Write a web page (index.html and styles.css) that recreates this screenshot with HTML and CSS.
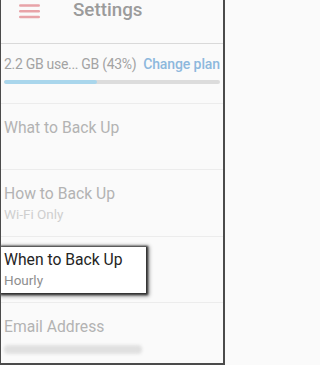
FILE: index.html
```html
<!DOCTYPE html>
<html>
<head>
<meta charset="utf-8">
<link rel="stylesheet" href="styles.css">
</head>
<body>
<div class="frame">
  <header class="topbar">
    <svg class="menu" width="21" height="20" viewBox="0 0 21 20">
      <g stroke="#e8a3a8" stroke-width="2.6" stroke-linecap="round">
        <line x1="1.3" y1="5.5" x2="19.7" y2="5.5"/>
        <line x1="1.3" y1="11.2" x2="19.7" y2="11.2"/>
        <line x1="1.3" y1="17" x2="19.7" y2="17"/>
      </g>
    </svg>
    <span class="title">Settings</span>
  </header>
  <section class="usage">
    <div class="usage-line">
      <span class="usage-text">2.2 GB use... GB (43%)</span>
      <span class="change">Change plan</span>
    </div>
    <div class="bar"><div class="fill" style="width:43%"></div></div>
  </section>
  <div class="row r1">
    <div class="row-title">What to Back Up</div>
  </div>
  <div class="row r2">
    <div class="row-title">How to Back Up</div>
    <div class="row-sub">Wi-Fi Only</div>
  </div>
  <div class="row r3">
    <div class="callout">
      <div class="row-title dark">When to Back Up</div>
      <div class="row-sub mid">Hourly</div>
    </div>
  </div>
  <div class="row r4">
    <div class="row-title">Email Address</div>
    <div class="smudge"></div>
  </div>
</div>
</body>
</html>
```
FILE: styles.css
```css
html, body {
  margin: 0;
  padding: 0;
  background: #fafafa;
}
body {
  font-family: Roboto, "Noto Sans", sans-serif;
}
.frame {
  box-sizing: border-box;
  width: 225px;
  height: 365px;
  border-left: 1px solid #4b4b4b;
  border-right: 2px solid #4b4b4b;
  border-bottom: 2px solid #4b4b4b;
  background: #fafafa;
  overflow: hidden;
}
.topbar {
  height: 43px;
  border-bottom: 1px solid #d9d9d9;
  display: flex;
  align-items: flex-start;
}
.menu {
  display: block;
  margin-left: 18px;
  margin-top: 0;
}
.title {
  margin-left: 33px;
  font-size: 18.8px;
  line-height: 21px;
  font-weight: 500;
  color: #9b9b9b;
}
.usage {
  padding: 12px 3px 19px 3px;
  border-bottom: 1px solid #ececec;
}
.usage-line {
  display: flex;
  justify-content: space-between;
  font-size: 14px;
  line-height: 17px;
}
.usage-text {
  color: #a3a3a3;
  letter-spacing: -0.3px;
}
.change {
  color: #8db8dd;
  font-weight: 500;
  letter-spacing: -0.1px;
}
.bar {
  margin-top: 7px;
  height: 4px;
  border-radius: 2px;
  background: #dcdcdc;
  overflow: hidden;
}
.fill {
  height: 100%;
  background: #a9d6ec;
  border-radius: 2px;
}
.row {
  box-sizing: border-box;
  padding: 15px 3px 0 3px;
  border-bottom: 1px solid #ececec;
}
.r1 { height: 66px; }
.r2 { height: 67px; }
.r3 { height: 66px; padding: 10px 0 0 0; }
.r4 { border-bottom: none; }
.row-title {
  font-size: 15.7px;
  line-height: 18px;
  color: #b3b3b3;
}
.row-sub {
  margin-top: 3px;
  font-size: 13.5px;
  line-height: 16px;
  color: #cfcfcf;
}
.callout {
  width: 145px;
  box-sizing: border-box;
  height: 46px;
  padding: 4px 3px 0 3px;
  background: #ffffff;
  box-shadow: 0 0 2px 1.5px rgba(35,35,35,0.9), 1px 1px 4px 2px rgba(0,0,0,0.45);
}
.dark { color: #242424; }
.mid { color: #8e8e8e; }
.smudge {
  margin-top: 9px;
  margin-left: 0;
  width: 138px;
  height: 9px;
  border-radius: 4px;
  background: #e0e0e0;
  filter: blur(1.8px);
}
```
